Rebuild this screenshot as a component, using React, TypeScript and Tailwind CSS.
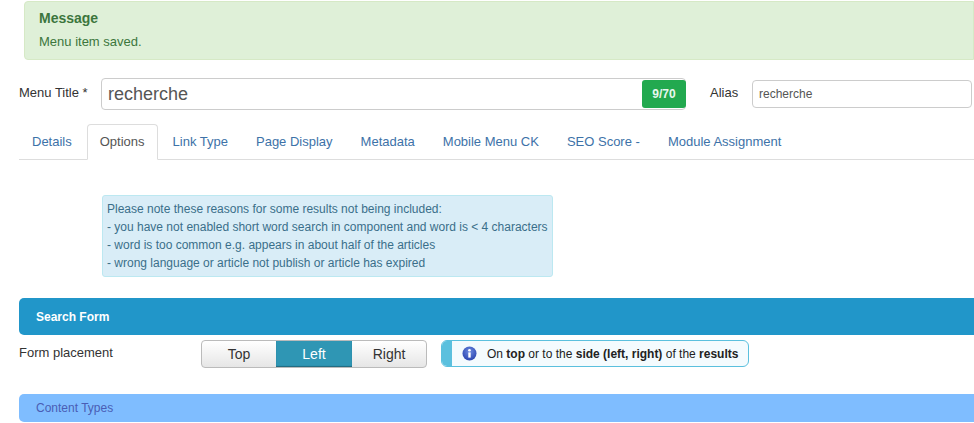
export default function App() {
  const tabs = ["Details", "Options", "Link Type", "Page Display", "Metadata", "Mobile Menu CK", "SEO Score -", "Module Assignment"];
  return (
    <div className="w-[974px] h-[423px] overflow-hidden bg-white text-[13px] text-[#333] font-['Liberation_Sans',Arial,sans-serif]">
      <div className="ml-[24px] mt-[1px] w-[950px] h-[59px] bg-[#dff0d8] border border-[#d6e9c6] rounded-l-[4px] pl-[14px] pt-[8px] text-[#3c763d]">
        <div className="text-[14px] font-bold leading-[16px]">Message</div>
        <div className="mt-[7px] leading-[18px]">Menu item saved.</div>
      </div>

      <div className="flex items-center ml-[19px] mt-[18px] h-[32px]">
        <label className="w-[82px] -mt-[2px] leading-[18px]">Menu Title *</label>
        <div className="relative w-[585px] h-[32px] border border-[#ccc] rounded-[4px] flex items-center pl-[6px] text-[18px] text-[#555]">
          recherche
          <span className="absolute -right-[1px] top-[1px] w-[44px] h-[28px] bg-[#22a94f] rounded-[3px] flex items-center justify-center text-[12px] font-bold text-[#e8f7ee]">9/70</span>
        </div>
        <label className="ml-[24px] w-[42px] -mt-[2px] leading-[18px]">Alias</label>
        <div className="w-[220px] h-[28px] border border-[#ccc] rounded-[4px] flex items-center pl-[6px] text-[12px] text-[#555]">recherche</div>
      </div>

      <div className="flex ml-[19px] mt-[14px] h-[36px] w-[955px] border-b border-[#ddd]">
        {tabs.map((t) => (
          <div
            key={t}
            className={
              t === "Options"
                ? "h-[36px] mr-[2px] px-[12px] border border-[#ddd] border-b-white rounded-t-[4px] bg-white text-[#555] leading-[34px]"
                : "h-[36px] mr-[2px] px-[13px] text-[#3d72a8] leading-[36px]"
            }
          >
            {t}
          </div>
        ))}
      </div>

      <div className="ml-[102px] mt-[35px] w-[451px] h-[82px] bg-[#d9edf7] border border-[#bce8f1] rounded-[3px] px-[4px] py-[4px] text-[12px] leading-[18px] text-[#3a6f8a] whitespace-nowrap">
        <div>Please note these reasons for some results not being included:</div>
        <div>- you have not enabled short word search in component and word is &lt; 4 characters</div>
        <div>- word is too common e.g. appears in about half of the articles</div>
        <div>- wrong language or article not publish or article has expired</div>
      </div>

      <div className="ml-[19px] mt-[21px] w-[955px] h-[37px] bg-[#2196c9] rounded-l-[5px] pl-[17px] flex items-center text-[12px] font-bold text-white">
        Search Form
      </div>

      <div className="flex ml-[19px] mt-[5px] h-[28px]">
        <div className="w-[182px] leading-[26px]">Form placement</div>
        <div className="flex w-[226px] h-[28px] border border-[#bbb] rounded-[4px] overflow-hidden bg-gradient-to-b from-white to-[#e6e6e6] text-[14px] leading-[26px] text-center">
          <div className="w-[74px] text-[#333]">Top</div>
          <div className="w-[76px] bg-[#2f96b4] text-white shadow-[inset_0_-1px_1px_rgba(0,0,0,0.3)]">Left</div>
          <div className="w-[74px] text-[#333]">Right</div>
        </div>
        <div className="flex items-center ml-[14px] w-[308px] h-[27px] border border-[#5bc0de] rounded-[6px] bg-[#f4fbfe] overflow-hidden text-[12px] text-[#222]">
          <div className="w-[10px] h-full bg-[#5bc0de] shrink-0" />
          <svg className="ml-[10px] shrink-0" width="15" height="15" viewBox="0 0 15 15">
            <defs>
              <radialGradient id="g" cx="50%" cy="35%" r="65%">
                <stop offset="0%" stopColor="#6d8be0" />
                <stop offset="100%" stopColor="#2a45b0" />
              </radialGradient>
            </defs>
            <circle cx="7.5" cy="7.5" r="7" fill="url(#g)" />
            <circle cx="7.5" cy="4.2" r="1.3" fill="#fff" />
            <rect x="6.3" y="6.4" width="2.4" height="5.2" fill="#fff" />
          </svg>
          <span className="ml-[10px] whitespace-nowrap">
            On <b>top</b> or to the <b>side (left, right)</b> of the <b>results</b>
          </span>
        </div>
      </div>

      <div className="ml-[19px] mt-[26px] w-[955px] h-[28px] bg-[#7fbdff] rounded-l-[5px] pl-[17px] flex items-center text-[12px] text-[#4a5db5]">
        Content Types
      </div>
    </div>
  );
}
